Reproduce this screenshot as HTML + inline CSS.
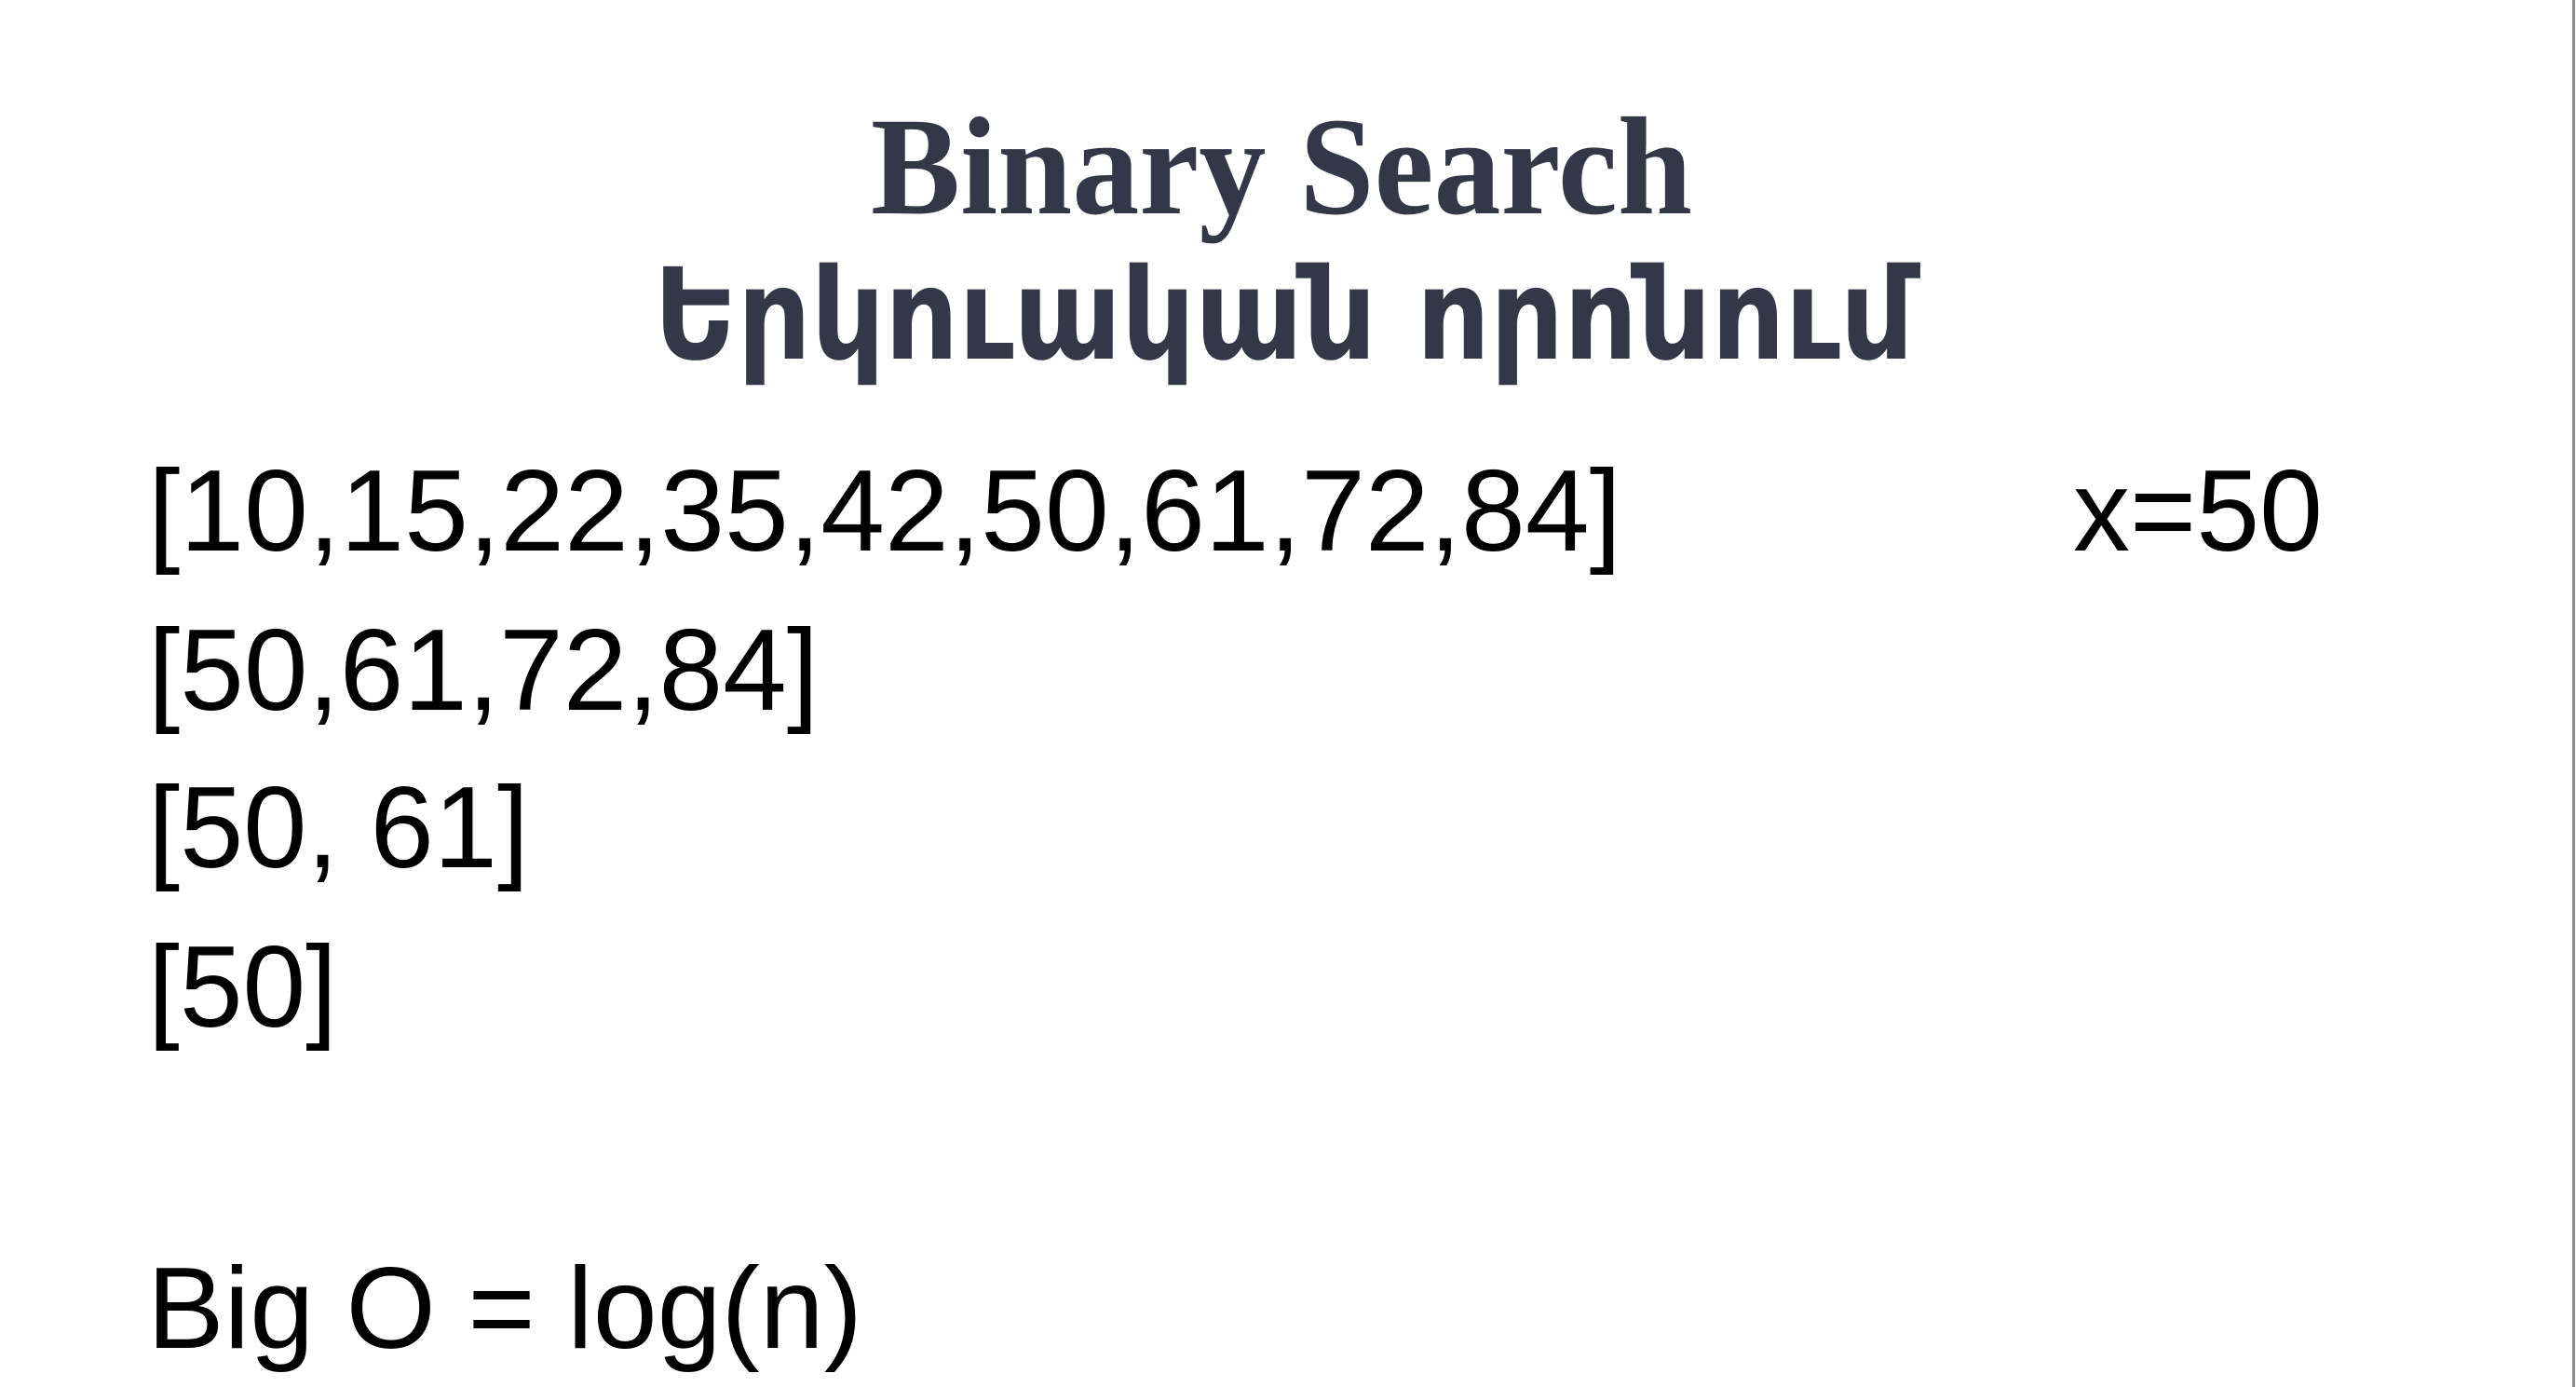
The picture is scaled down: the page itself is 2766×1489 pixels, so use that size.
<!DOCTYPE html>
<html><head><meta charset="utf-8"><style>
html,body{margin:0;padding:0;background:#fff;}
body{width:2766px;height:1489px;overflow:hidden;position:relative;}
svg{position:absolute;left:0;top:0;}
</style></head><body>
<svg width="2766" height="1489" xmlns="http://www.w3.org/2000/svg">
<rect x="0" y="0" width="2766" height="1489" fill="#fff"/>
<rect x="2762" y="0" width="3" height="1489" fill="#8c8c94"/>
<text x="935" y="229" font-family="Liberation Serif, serif" font-weight="bold" font-size="150" fill="#323848" textLength="882" lengthAdjust="spacingAndGlyphs">Binary Search</text>
<text x="702" y="385" font-family="DejaVu Sans, sans-serif" font-weight="bold" font-size="136" fill="#323848" textLength="1353" lengthAdjust="spacingAndGlyphs">Երկուական որոնում</text>
<g font-family="Liberation Sans, Arial, sans-serif" font-size="124" fill="#000">
<text x="159" y="591" textLength="1582" lengthAdjust="spacingAndGlyphs">[10,15,22,35,42,50,61,72,84]</text>
<text x="2226" y="591" textLength="268" lengthAdjust="spacingAndGlyphs">x=50</text>
<text x="159" y="762" textLength="720" lengthAdjust="spacingAndGlyphs">[50,61,72,84]</text>
<text x="159" y="931" textLength="409" lengthAdjust="spacingAndGlyphs">[50, 61]</text>
<text x="159" y="1102" textLength="203" lengthAdjust="spacingAndGlyphs">[50]</text>
<text x="158" y="1447" textLength="768" lengthAdjust="spacingAndGlyphs">Big O = log(n)</text>
</g>
</svg>
</body></html>
